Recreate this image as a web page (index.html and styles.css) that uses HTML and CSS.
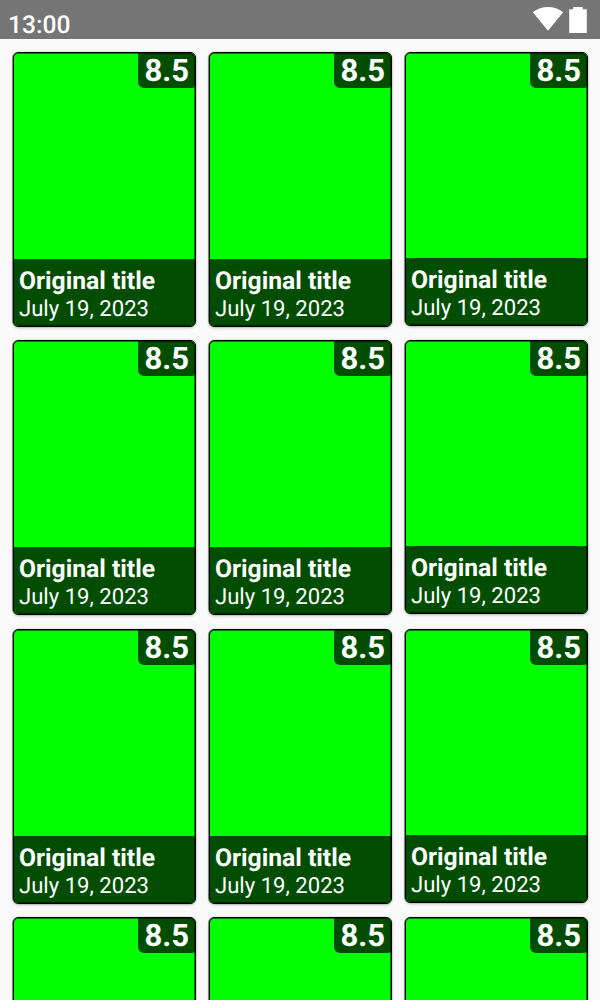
FILE: index.html
```html
<!DOCTYPE html>
<html lang="en">
<head>
<meta charset="utf-8">
<title>Movies</title>
<link rel="stylesheet" href="styles.css">
</head>
<body>
<header class="status">
  <span class="clock">13:00</span>
  <svg class="indicators" width="56" height="29" viewBox="0 0 56 29" fill="#fff">
    <path d="M16 25.7 L0.8 7.2 C9.5 .3 22.5 .3 31.2 7.2 Z"/>
    <path d="M37.2 4.3h4V2.1h9.4V4.3h4.2v23.6H37.2z"/>
  </svg>
</header>
<main class="grid"></main>
<template id="movie">
  <article class="card">
    <span class="rating">8.5</span>
    <div class="caption">
      <h2 class="title">Original title</h2>
      <p class="date">July 19, 2023</p>
    </div>
  </article>
</template>
<script src="grid.js"></script>
</body>
</html>
```
FILE: grid.js
```js
const grid = document.querySelector('.grid');
const movie = document.querySelector('#movie');
const total = 12;
const visibleCaptions = 9;
for (let i = 0; i < total; i++) {
  const card = movie.content.cloneNode(true);
  if (i >= visibleCaptions) card.querySelector('.caption').remove();
  grid.append(card);
}
```
FILE: styles.css
```css
* {
  box-sizing: border-box;
}

body {
  display: flex;
  flex-direction: column;
  margin: 0;
  height: 1000px;
  overflow: hidden;
  background: #fafafa;
  color: #fff;
  font-family: Roboto, sans-serif;
  text-rendering: geometricPrecision;
}

.status {
  display: flex;
  flex: none;
  justify-content: space-between;
  height: 39px;
  padding: 5px 12px 0 8px;
  background: #757575;
}

.clock {
  font-size: 24.6px;
  font-weight: 500;
  line-height: 41px;
}

.indicators {
  display: block;
}

.grid {
  display: grid;
  flex: 1;
  min-height: 0;
  overflow: hidden;
  grid-template-columns: 183px 183px 183px;
  grid-template-rows: repeat(3, 275px) 70px;
  align-content: start;
  gap: 13.4px 13px;
  padding: 13px 12px 0 13px;
}

.card {
  position: relative;
  display: flex;
  flex-direction: column;
  justify-content: flex-end;
  overflow: hidden;
  border: 1px solid #000;
  border-radius: 6px;
  background: #0f0;
  box-shadow: -1px 0 0 rgba(0, 0, 0, .4), 0 0 1px rgba(0, 0, 0, .5), 0 1px 3px rgba(0, 0, 0, .25);
}

.card::after {
  content: "";
  position: absolute;
  inset: 0;
  border-radius: 5px;
  box-shadow: inset -1px 1px 0 rgba(0, 0, 0, .5), inset 0 -1px 0 rgba(0, 0, 0, .5);
}

.card:nth-child(3n) {
  height: 274px;
}

.card:nth-child(n + 10) {
  height: 100px;
}

.rating {
  position: absolute;
  top: 0;
  right: 0;
  width: 57px;
  height: 35px;
  padding-left: 6.5px;
  border-radius: 0 0 3px 6px;
  background: #004d00;
  font-size: 31px;
  font-weight: 700;
  line-height: 35px;
}

.caption {
  height: 67px;
  padding: 8px 5px 0;
  background: #004d00;
}

.title,
.date {
  margin: 0;
  white-space: nowrap;
}

.title {
  font-size: 24.7px;
  font-weight: 700;
  line-height: 29px;
}

.date {
  font-size: 22.1px;
  font-weight: 400;
  line-height: 26px;
}
```
